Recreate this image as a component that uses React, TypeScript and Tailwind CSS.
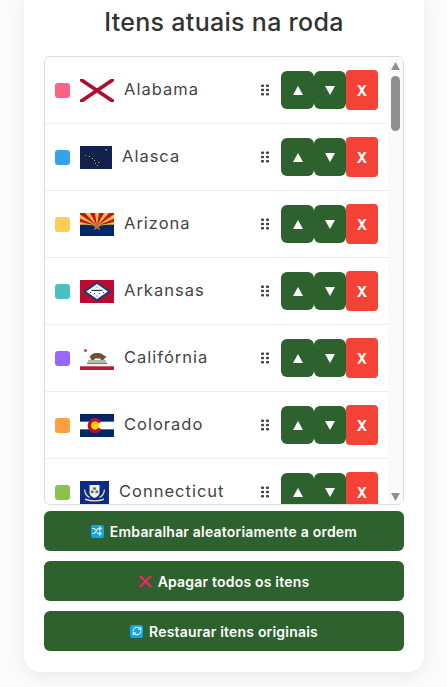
import React from 'react';
import { Shuffle, RefreshCw } from 'lucide-react';

const COLORS = ['#FF6384', '#36A2EB', '#FFCE56', '#4BC0C0', '#9966FF', '#FF9F40', '#8BC34A'];

const STATES = ['Alabama', 'Alasca', 'Arizona', 'Arkansas', 'Califórnia', 'Colorado', 'Connecticut'];

const Flag = ({ name }: { name: string }) => {
  if (name === 'Alabama') {
    return (
      <svg width="34" height="23" viewBox="0 0 34 23" className="shrink-0">
        <path d="M0 0L34 23M34 0L0 23" stroke="#b10c2f" strokeWidth="3.6" />
      </svg>
    );
  }
  if (name === 'Alasca') {
    return (
      <svg width="32" height="23" viewBox="0 0 32 23" className="shrink-0">
        <rect width="32" height="23" fill="#11224f" />
        <g fill="#e8a33d">
          <rect x="25.5" y="3" width="1.4" height="1.4" />
          <rect x="5" y="9" width="0.9" height="0.9" />
          <rect x="9" y="10" width="1" height="1" />
          <rect x="12" y="12" width="1" height="1" />
          <rect x="14" y="14" width="1" height="1" />
          <rect x="15" y="17" width="1" height="1" />
          <rect x="17" y="19" width="1" height="1" />
          <rect x="18.5" y="16" width="1" height="1" />
        </g>
      </svg>
    );
  }
  if (name === 'Arizona') {
    return (
      <svg width="34" height="23" viewBox="0 0 34 23" className="shrink-0">
        <rect width="34" height="11.5" fill="#c8102e" />
        <rect y="11.5" width="34" height="11.5" fill="#002868" />
        <g fill="#fdc82f">
          <path d="M17 13L0 1.5V5.5Z" />
          <path d="M17 13L5 0H10Z" />
          <path d="M17 13L15 0H19Z" />
          <path d="M17 13L24 0H29Z" />
          <path d="M17 13L34 1.5V5.5Z" />
          <path d="M17 13L0 9V11.5H6Z" />
          <path d="M17 13L34 9V11.5H28Z" />
        </g>
        <path d="M17 8L18.3 11.8H22L19 14L20.2 17.5L17 15.4L13.8 17.5L15 14L12 11.8H15.7Z" fill="#c9682b" />
      </svg>
    );
  }
  if (name === 'Arkansas') {
    return (
      <svg width="34" height="23" viewBox="0 0 34 23" className="shrink-0">
        <rect width="34" height="23" fill="#bf0a30" />
        <path d="M17 1.5L31.5 11.5L17 21.5L2.5 11.5Z" fill="#1d3a7a" />
        <path d="M17 4L27.8 11.5L17 19L6.2 11.5Z" fill="#fff" />
        <rect x="11.5" y="9.8" width="11" height="1.2" fill="#1d3a7a" />
        <g fill="#1d3a7a">
          <rect x="10" y="12" width="1" height="1" />
          <rect x="14" y="13" width="1" height="1" />
          <rect x="19" y="13" width="1" height="1" />
          <rect x="16.5" y="15.5" width="1" height="1" />
          <rect x="23" y="12" width="1" height="1" />
          <rect x="16.5" y="6.5" width="1" height="1" />
        </g>
      </svg>
    );
  }
  if (name === 'Califórnia') {
    return (
      <svg width="34" height="23" viewBox="0 0 34 23" className="shrink-0">
        <rect width="34" height="23" fill="#fff" />
        <rect y="19.3" width="34" height="3.7" fill="#b8193a" />
        <path d="M5.5 1.5l.6 1.3 1.4.1-1 .9.3 1.4-1.3-.7-1.3.7.3-1.4-1-.9 1.4-.1Z" fill="#c8283c" />
        <path d="M10 10.5C10 8 13 6 17 6C20 6 22 6.5 24 8.5L26.5 9.5L25 11L24 12.5L22.5 13H21L20.5 11.5H15L14 13H11.5Z" fill="#6e5238" />
        <rect x="8" y="13.5" width="18" height="1" fill="#5d7a48" />
        <rect x="7" y="15.5" width="20" height="1.6" fill="#7c7c6c" />
      </svg>
    );
  }
  if (name === 'Colorado') {
    return (
      <svg width="34" height="23" viewBox="0 0 34 23" className="shrink-0">
        <rect width="34" height="23" fill="#002868" />
        <rect y="7.67" width="34" height="7.67" fill="#fff" />
        <circle cx="15" cy="11.5" r="4.2" fill="#ffd100" />
        <path d="M21.5 7.2A7.6 7.6 0 1 0 21.5 15.8L18.8 13.6A4.2 4.2 0 1 1 18.8 9.4Z" fill="#bf0a30" />
      </svg>
    );
  }
  if (name === 'Connecticut') {
    return (
      <svg width="29" height="23" viewBox="0 0 29 23" className="shrink-0">
        <rect width="29" height="23" fill="#0d2a8a" />
        <path d="M9.5 4H19.5V11.5C19.5 14.5 17 16 14.5 17C12 16 9.5 14.5 9.5 11.5Z" fill="#f2f2ea" />
        <circle cx="14.5" cy="7.5" r="1.5" fill="#5d7a55" />
        <circle cx="12.2" cy="10.8" r="1.5" fill="#5d7a55" />
        <circle cx="16.8" cy="10.8" r="1.5" fill="#5d7a55" />
        <path d="M5 8Q6 14 10 16L9 17Q4 14 4 9Z" fill="#d9cf9f" />
        <path d="M24 8Q23 14 19 16L20 17Q25 14 25 9Z" fill="#d9cf9f" />
        <path d="M5 17.5Q14.5 21 24 17.5L24 19Q14.5 22 5 19Z" fill="#efe8c8" />
      </svg>
    );
  }
  return null;
};

const DragHandle = () => (
  <svg width="8" height="12" viewBox="0 0 8 12" className="shrink-0 text-[#444]" fill="currentColor">
    <rect x="0" y="0.5" width="3" height="2.6" rx="0.8" />
    <rect x="5" y="0.5" width="3" height="2.6" rx="0.8" />
    <rect x="0" y="4.7" width="3" height="2.6" rx="0.8" />
    <rect x="5" y="4.7" width="3" height="2.6" rx="0.8" />
    <rect x="0" y="8.9" width="3" height="2.6" rx="0.8" />
    <rect x="5" y="8.9" width="3" height="2.6" rx="0.8" />
  </svg>
);

const Triangle = ({ down, size = 10, fill = '#fff' }: { down?: boolean; size?: number; fill?: string }) => (
  <svg width={size} height={size - 1} viewBox="0 0 10 9" fill={fill} className="shrink-0">
    <path d={down ? 'M0 0H10L5 9Z' : 'M5 0L10 9H0Z'} />
  </svg>
);

const Row = ({ name, index }: { name: string; index: number }) => (
  <li className="flex items-center h-[67px] pl-[10px] pr-[10px] border-b border-[#eeeeee] shrink-0">
    <span
      className="w-[15px] h-[15px] rounded-[3px] shrink-0 mr-[10px]"
      style={{ backgroundColor: COLORS[index % COLORS.length] }}
    />
    <Flag name={name} />
    <span className="ml-[10px] flex-1 text-[16.5px] tracking-[1px] text-[#444] -mt-[2px]">{name}</span>
    <DragHandle />
    <div className="flex items-center ml-[12px] shrink-0">
      <button className="w-[33px] h-[38px] rounded-[6px] bg-[#2d622e] flex items-center justify-center">
        <Triangle />
      </button>
      <button className="w-[32px] h-[38px] rounded-[6px] bg-[#2d622e] flex items-center justify-center">
        <Triangle down />
      </button>
      <button className="w-[32px] h-[40px] rounded-[4px] bg-[#f44336] text-white text-[14px] font-bold flex items-center justify-center">
        X
      </button>
    </div>
  </li>
);

const ActionButton = ({ icon, label }: { icon: React.ReactNode; label: string }) => (
  <button className="h-[40px] w-full rounded-[6px] bg-[#2d622e] text-white text-[14px] font-semibold tracking-[0.2px] flex items-center justify-center gap-[6px]">
    {icon}
    <span>{label}</span>
  </button>
);

export default function App() {
  return (
    <div className="h-[687px] overflow-hidden bg-[#fbfbfb] pl-[24px] font-['Inter','Liberation_Sans',sans-serif]">
      <div className="w-[400px] bg-white rounded-b-[16px] shadow-[0_4px_16px_rgba(0,0,0,0.07)] px-[20px] pb-[21px]">
        <h2 className="text-center text-[25px] leading-[44px] font-medium text-[#333] h-[56px] tracking-[0.3px]">
          Itens atuais na roda
        </h2>
        <div className="flex h-[449px] overflow-hidden border border-[#dddddd] rounded-[6px]">
          <ul className="flex-1 min-w-0">
            {STATES.map((name, i) => (
              <Row key={name} name={name} index={i} />
            ))}
          </ul>
          <div className="w-[15px] shrink-0 bg-[#fafafa] flex flex-col items-center pt-[5px] pb-[3px]">
            <Triangle size={9} fill="#8f8f8f" />
            <div className="w-[9px] h-[55px] mt-[6px] rounded-full bg-[#8f8f8f]" />
            <div className="mt-auto">
              <Triangle down size={9} fill="#8f8f8f" />
            </div>
          </div>
        </div>
        <div className="mt-[6px] flex flex-col gap-[10px]">
          <ActionButton
            label="Embaralhar aleatoriamente a ordem"
            icon={
              <span className="w-[13px] h-[13px] rounded-[2px] bg-[#0ea5e9] flex items-center justify-center">
                <Shuffle size={10} color="#fff" strokeWidth={2.5} />
              </span>
            }
          />
          <ActionButton
            label="Apagar todos os itens"
            icon={
              <svg width="13" height="13" viewBox="0 0 13 13" className="shrink-0">
                <path d="M1 1L12 12M12 1L1 12" stroke="#f4245e" strokeWidth="2.4" />
              </svg>
            }
          />
          <ActionButton
            label="Restaurar itens originais"
            icon={
              <span className="w-[13px] h-[13px] rounded-[2px] bg-[#0ea5e9] flex items-center justify-center">
                <RefreshCw size={10} color="#fff" strokeWidth={2.5} />
              </span>
            }
          />
        </div>
      </div>
    </div>
  );
}
